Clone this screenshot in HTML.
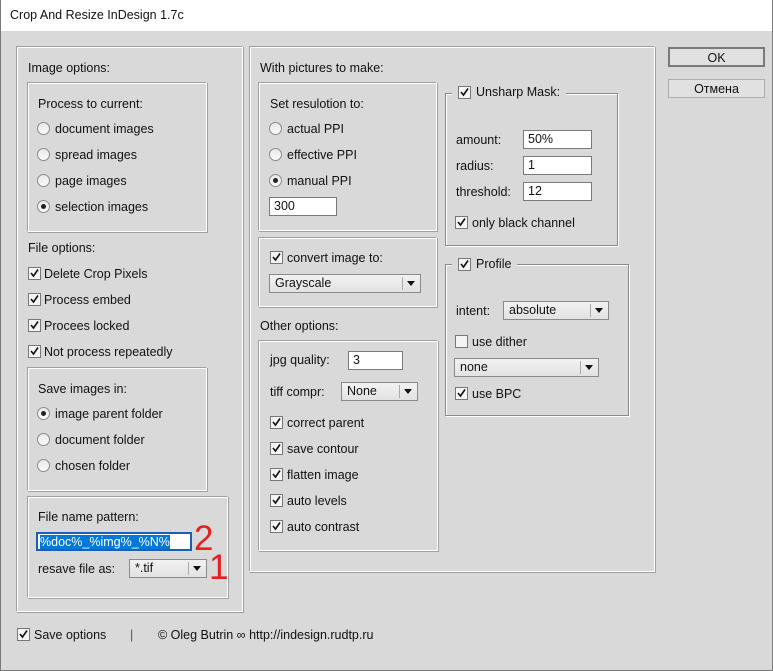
<!DOCTYPE html>
<html><head><meta charset="utf-8"><style>
*{box-sizing:border-box;margin:0;padding:0}
body{width:773px;height:671px;background:#d9d9d9;font-family:"Liberation Sans",Tahoma,sans-serif;font-size:12.5px;color:#111;position:relative;overflow:hidden}
.a{position:absolute;white-space:nowrap}
.title{position:absolute;left:0;top:0;width:773px;height:31px;background:#fff;padding:8px 0 0 10px;font-size:12.5px}
.win{position:absolute;left:0;top:0;width:773px;height:671px;border:1px solid #7a7a7a;border-top:none}
.box{position:absolute;border-top:1px solid #a0a0a0;border-left:1px solid #a0a0a0;border-right:1px solid #fff;border-bottom:1px solid #fff;box-shadow:inset 1px 1px 0 #fff,1px 1px 0 #a0a0a0}
.fs{position:absolute;border:1px solid #8a8a8a;box-shadow:1px 1px 0 #fff,inset 1px 1px 0 #fff}
.leg{position:absolute;background:#d9d9d9;padding:0 4px;white-space:nowrap}
.rb{position:absolute;width:13px;height:13px;border-radius:50%;border:1px solid #8a8a8a;background:linear-gradient(#e8e8e8,#fafafa)}
.rb.on::after{content:"";position:absolute;left:3px;top:3px;width:5px;height:5px;border-radius:50%;background:#222}
.cb{position:absolute;width:13px;height:13px;border:1px solid #777;background:#f4f4f4}
.cb svg{position:absolute;left:0;top:0}
.inp{position:absolute;height:19px;background:#fff;border:1px solid #7a7a7a;padding:1px 0 0 4px;white-space:nowrap}
.sel{position:absolute;height:19px;border:1px solid #8a8a8a;background:linear-gradient(#f2f2f2,#e2e2e2);padding:1px 0 0 5px;white-space:nowrap}
.sel::after{content:"";position:absolute;right:17px;top:2px;width:1px;height:13px;background:#aaa}
.sel i{position:absolute;right:5px;top:6px;border-left:4px solid transparent;border-right:4px solid transparent;border-top:5px solid #111}
.btn{position:absolute;border:1px solid #adadad;background:#e1e1e1;text-align:center;padding-top:2px}
</style></head><body>
<div class="title">Crop And Resize InDesign 1.7c</div>
<div class="win"></div>

<!-- left -->
<div class="box" style="left:16px;top:46px;width:227px;height:566px"></div>
<div class="a" style="left:28px;top:61px">Image options:</div>
<div class="box" style="left:27px;top:82px;width:180px;height:150px"></div>
<div class="a" style="left:38px;top:97px">Process to current:</div>
<div class="rb" style="left:37px;top:122px"></div><div class="a" style="left:55px;top:122px">document images</div>
<div class="rb" style="left:37px;top:148px"></div><div class="a" style="left:55px;top:148px">spread images</div>
<div class="rb" style="left:37px;top:174px"></div><div class="a" style="left:55px;top:174px">page images</div>
<div class="rb on" style="left:37px;top:200px"></div><div class="a" style="left:55px;top:200px">selection images</div>
<div class="a" style="left:28px;top:241px">File options:</div>
<div class="cb" style="left:28px;top:267px"><svg width="11" height="11"><path d="M2 5l2.5 3L9 1.5" fill="none" stroke="#111" stroke-width="1.6"/></svg></div><div class="a" style="left:44px;top:267px">Delete Crop Pixels</div>
<div class="cb" style="left:28px;top:293px"><svg width="11" height="11"><path d="M2 5l2.5 3L9 1.5" fill="none" stroke="#111" stroke-width="1.6"/></svg></div><div class="a" style="left:44px;top:293px">Process embed</div>
<div class="cb" style="left:28px;top:319px"><svg width="11" height="11"><path d="M2 5l2.5 3L9 1.5" fill="none" stroke="#111" stroke-width="1.6"/></svg></div><div class="a" style="left:44px;top:319px">Procees locked</div>
<div class="cb" style="left:28px;top:345px"><svg width="11" height="11"><path d="M2 5l2.5 3L9 1.5" fill="none" stroke="#111" stroke-width="1.6"/></svg></div><div class="a" style="left:44px;top:345px">Not process repeatedly</div>
<div class="box" style="left:27px;top:367px;width:180px;height:124px"></div>
<div class="a" style="left:38px;top:382px">Save images in:</div>
<div class="rb on" style="left:37px;top:407px"></div><div class="a" style="left:55px;top:407px">image parent folder</div>
<div class="rb" style="left:37px;top:433px"></div><div class="a" style="left:55px;top:433px">document folder</div>
<div class="rb" style="left:37px;top:459px"></div><div class="a" style="left:55px;top:459px">chosen folder</div>
<div class="box" style="left:27px;top:496px;width:201px;height:102px"></div>
<div class="a" style="left:38px;top:510px">File name pattern:</div>
<div class="inp" style="left:36px;top:532px;width:156px;border:2px solid #1a5fb4;padding:1px 0 0 2px"><span style="background:#0078d7;color:#fff">%doc%_%img%_%N%</span></div>
<div class="a" style="left:194px;top:521px;color:#e62020;font-size:35px;line-height:36px">2</div>
<div class="a" style="left:209px;top:550px;color:#e62020;font-size:35px;line-height:36px">1</div>
<div class="a" style="left:38px;top:562px">resave file as:</div>
<div class="sel" style="left:129px;top:559px;width:78px">*.tif<i></i></div>

<!-- middle -->
<div class="box" style="left:249px;top:46px;width:406px;height:526px"></div>
<div class="a" style="left:260px;top:61px">With pictures to make:</div>
<div class="box" style="left:258px;top:82px;width:179px;height:149px"></div>
<div class="a" style="left:270px;top:97px">Set resulotion to:</div>
<div class="rb" style="left:269px;top:122px"></div><div class="a" style="left:287px;top:122px">actual PPI</div>
<div class="rb" style="left:269px;top:148px"></div><div class="a" style="left:287px;top:148px">effective PPI</div>
<div class="rb on" style="left:269px;top:174px"></div><div class="a" style="left:287px;top:174px">manual PPI</div>
<div class="inp" style="left:269px;top:197px;width:68px">300</div>
<div class="box" style="left:258px;top:237px;width:179px;height:70px"></div>
<div class="cb" style="left:270px;top:251px"><svg width="11" height="11"><path d="M2 5l2.5 3L9 1.5" fill="none" stroke="#111" stroke-width="1.6"/></svg></div><div class="a" style="left:287px;top:251px">convert image to:</div>
<div class="sel" style="left:269px;top:274px;width:152px">Grayscale<i></i></div>
<div class="a" style="left:260px;top:319px">Other options:</div>
<div class="box" style="left:258px;top:340px;width:180px;height:211px"></div>
<div class="a" style="left:270px;top:353px">jpg quality:</div>
<div class="inp" style="left:348px;top:351px;width:55px">3</div>
<div class="a" style="left:270px;top:385px">tiff compr:</div>
<div class="sel" style="left:341px;top:382px;width:77px">None<i></i></div>
<div class="cb" style="left:270px;top:416px"><svg width="11" height="11"><path d="M2 5l2.5 3L9 1.5" fill="none" stroke="#111" stroke-width="1.6"/></svg></div><div class="a" style="left:287px;top:416px">correct parent</div>
<div class="cb" style="left:270px;top:442px"><svg width="11" height="11"><path d="M2 5l2.5 3L9 1.5" fill="none" stroke="#111" stroke-width="1.6"/></svg></div><div class="a" style="left:287px;top:442px">save contour</div>
<div class="cb" style="left:270px;top:468px"><svg width="11" height="11"><path d="M2 5l2.5 3L9 1.5" fill="none" stroke="#111" stroke-width="1.6"/></svg></div><div class="a" style="left:287px;top:468px">flatten image</div>
<div class="cb" style="left:270px;top:494px"><svg width="11" height="11"><path d="M2 5l2.5 3L9 1.5" fill="none" stroke="#111" stroke-width="1.6"/></svg></div><div class="a" style="left:287px;top:494px">auto levels</div>
<div class="cb" style="left:270px;top:520px"><svg width="11" height="11"><path d="M2 5l2.5 3L9 1.5" fill="none" stroke="#111" stroke-width="1.6"/></svg></div><div class="a" style="left:287px;top:520px">auto contrast</div>

<!-- unsharp -->
<div class="fs" style="left:445px;top:93px;width:173px;height:153px"></div>
<div class="leg" style="left:452px;top:85px;padding-left:4px;padding-right:6px"><span style="display:inline-block;width:20px"></span>Unsharp Mask:</div>
<div class="cb" style="left:458px;top:86px"><svg width="11" height="11"><path d="M2 5l2.5 3L9 1.5" fill="none" stroke="#111" stroke-width="1.6"/></svg></div>
<div class="a" style="left:456px;top:133px">amount:</div><div class="inp" style="left:523px;top:130px;width:69px">50%</div>
<div class="a" style="left:456px;top:159px">radius:</div><div class="inp" style="left:523px;top:156px;width:69px">1</div>
<div class="a" style="left:456px;top:185px">threshold:</div><div class="inp" style="left:523px;top:182px;width:69px">12</div>
<div class="cb" style="left:455px;top:216px"><svg width="11" height="11"><path d="M2 5l2.5 3L9 1.5" fill="none" stroke="#111" stroke-width="1.6"/></svg></div><div class="a" style="left:472px;top:216px">only black channel</div>

<!-- profile -->
<div class="fs" style="left:445px;top:264px;width:184px;height:152px"></div>
<div class="leg" style="left:452px;top:257px;padding-right:6px"><span style="display:inline-block;width:20px"></span>Profile</div>
<div class="cb" style="left:458px;top:258px"><svg width="11" height="11"><path d="M2 5l2.5 3L9 1.5" fill="none" stroke="#111" stroke-width="1.6"/></svg></div>
<div class="a" style="left:456px;top:304px">intent:</div>
<div class="sel" style="left:503px;top:301px;width:106px">absolute<i></i></div>
<div class="cb" style="left:455px;top:335px"></div><div class="a" style="left:472px;top:335px">use dither</div>
<div class="sel" style="left:454px;top:358px;width:145px">none<i></i></div>
<div class="cb" style="left:455px;top:387px"><svg width="11" height="11"><path d="M2 5l2.5 3L9 1.5" fill="none" stroke="#111" stroke-width="1.6"/></svg></div><div class="a" style="left:472px;top:387px">use BPC</div>

<!-- buttons -->
<div class="btn" style="left:668px;top:47px;width:97px;height:20px;border:2px solid #7a7a7a">OK</div>
<div class="btn" style="left:668px;top:79px;width:97px;height:19px">Отмена</div>

<!-- footer -->
<div class="cb" style="left:17px;top:628px"><svg width="11" height="11"><path d="M2 5l2.5 3L9 1.5" fill="none" stroke="#111" stroke-width="1.6"/></svg></div>
<div class="a" style="left:34px;top:628px">Save options</div>
<div class="a" style="left:130px;top:628px;color:#555">|</div>
<div class="a" style="left:158px;top:628px">© Oleg Butrin ∞ http://indesign.rudtp.ru</div>
</body></html>
